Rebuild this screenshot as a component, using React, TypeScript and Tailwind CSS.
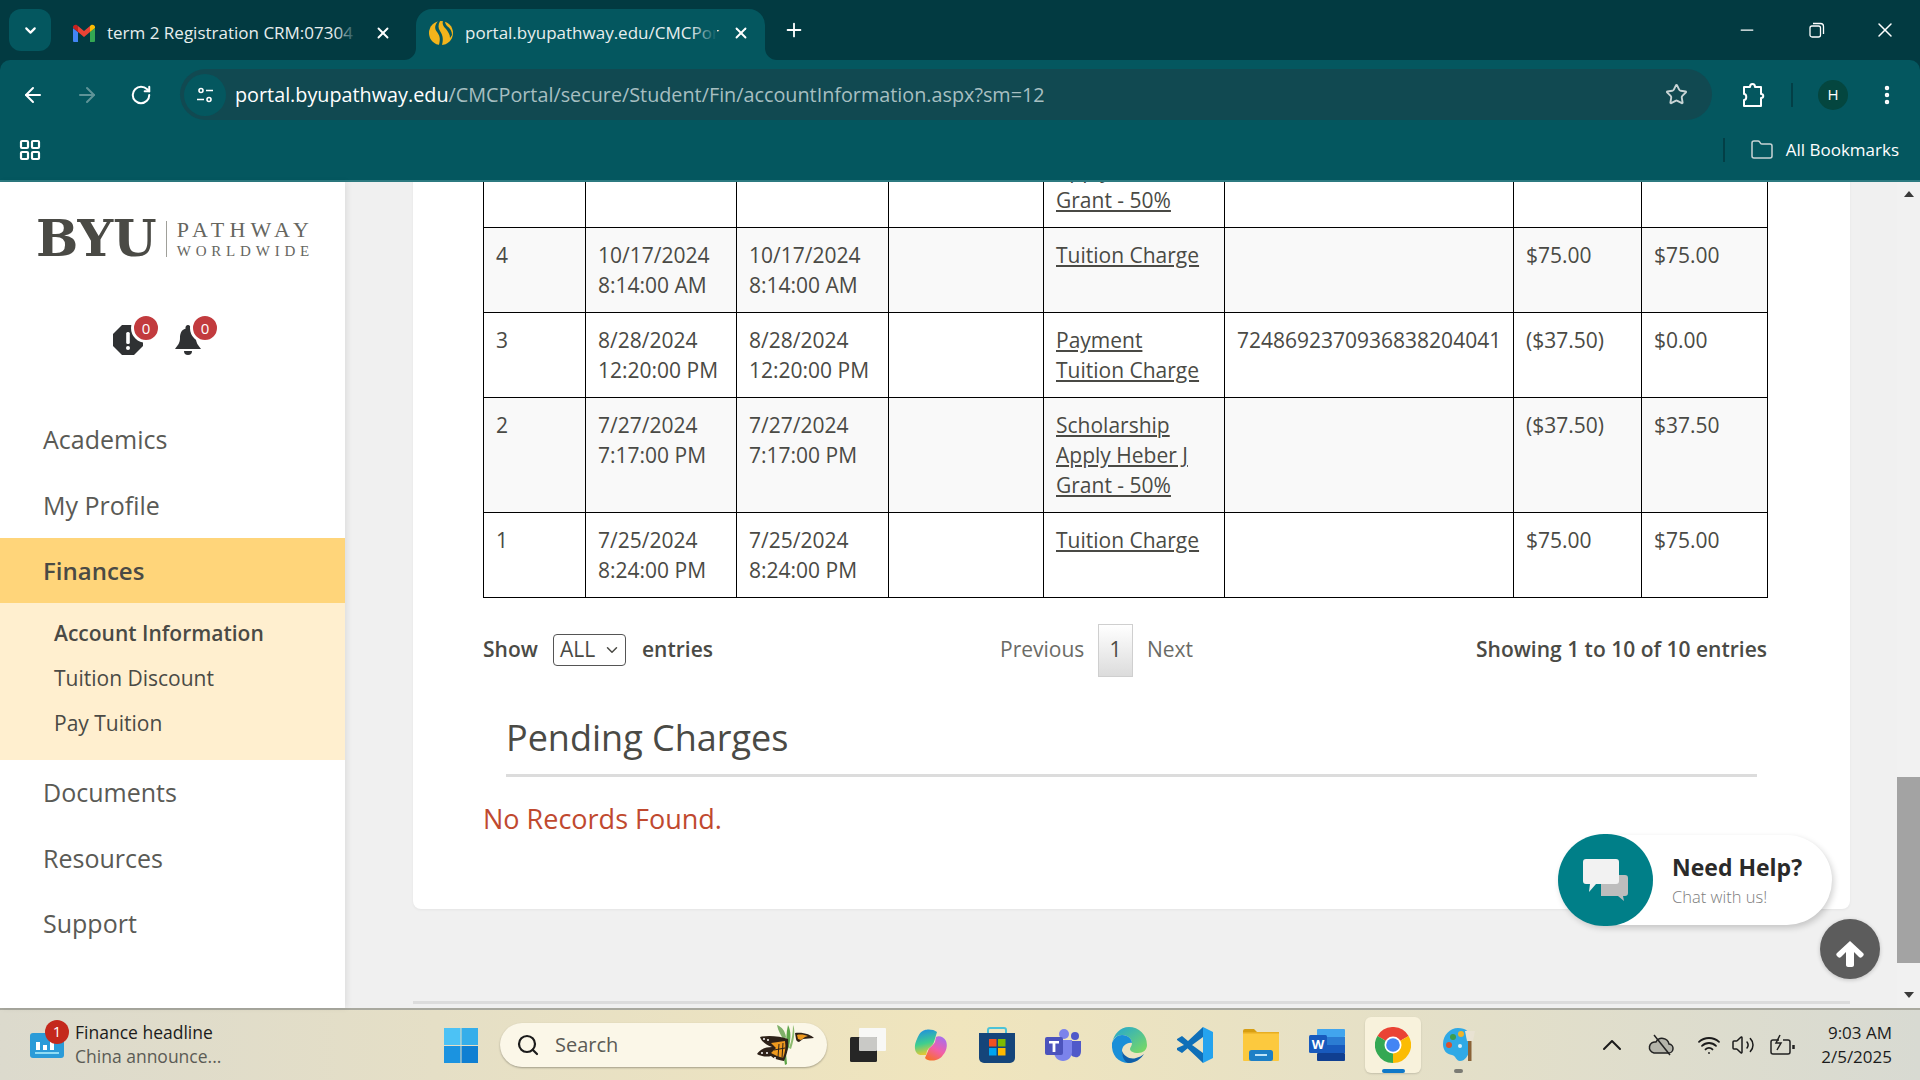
import { ArrowLeft, ArrowRight, ChevronDown, ChevronUp, EllipsisVertical, Folder, LayoutGrid, Minus, Plus, RotateCw, Search, Star, Volume2, Wifi, X } from "lucide-react";

const rows = [
  { n: "", a: [], b: [], links: ["Scholarship", "Apply Heber J", "Grant - 50%"], ref: "", amt: "", bal: "", alt: false },
  { n: "4", a: ["10/17/2024", "8:14:00 AM"], b: ["10/17/2024", "8:14:00 AM"], links: ["Tuition Charge"], ref: "", amt: "$75.00", bal: "$75.00", alt: true },
  { n: "3", a: ["8/28/2024", "12:20:00 PM"], b: ["8/28/2024", "12:20:00 PM"], links: ["Payment", "Tuition Charge"], ref: "7248692370936838204041", amt: "($37.50)", bal: "$0.00", alt: false },
  { n: "2", a: ["7/27/2024", "7:17:00 PM"], b: ["7/27/2024", "7:17:00 PM"], links: ["Scholarship", "Apply Heber J", "Grant - 50%"], ref: "", amt: "($37.50)", bal: "$37.50", alt: true },
  { n: "1", a: ["7/25/2024", "8:24:00 PM"], b: ["7/25/2024", "8:24:00 PM"], links: ["Tuition Charge"], ref: "", amt: "$75.00", bal: "$75.00", alt: false },
];

function GmailIcon() {
  return (
    <svg width="24" height="18" viewBox="0 0 24 18">
      <path d="M1 18V4l5 4v10H2a1 1 0 0 1-1-1z" fill="#4285f4" />
      <path d="M18 18V8l5-4v13a1 1 0 0 1-1 1z" fill="#34a853" />
      <path d="M6 8V2l6 5 6-5v6l-6 5z" fill="#ea4335" />
      <path d="M1 4V3c0-2 3-3.500 5-1v6z" fill="#c5221f" />
      <path d="M23 4V3c0-2-3-3.500-5-1v6z" fill="#fbbc04" />
    </svg>
  );
}

function PathwayIcon() {
  return (
    <svg width="24" height="24" viewBox="0 0 24 24">
      <circle cx="12" cy="12" r="12" fill="#f3b41b" />
      <path d="M9 0C6 4 5 7 8 11c2 3 4 5 2 13h3c2-7 0-11-2-14C9 7 9 4 11 0z" fill="#04575f" />
      <path d="M14 0c-1 3 0 5 3 8 2 3 4 5 4 9l2-3c0-4-2-7-5-9-1-1-2-3-2-5z" fill="#04575f" />
    </svg>
  );
}

function SiteIcon() {
  return (
    <svg width="18" height="18" viewBox="0 0 18 18" fill="none" stroke="#fff" strokeWidth="1.600">
      <circle cx="5" cy="4.500" r="2" />
      <path d="M10 4.500h7M1 13.500h7" />
      <circle cx="13" cy="13.500" r="2" />
    </svg>
  );
}

function ExtensionIcon() {
  return (
    <svg width="24" height="26" viewBox="0 0 24 26" fill="none" stroke="#fff" strokeWidth="2" strokeLinejoin="round">
      <path d="M2 5h6c0-4 5-4 5 0h6v7c3 0 3 4 0 4v8H2v-6c3 0 3-6 0-6z" />
    </svg>
  );
}

function RestoreIcon() {
  return (
    <svg width="16" height="16" viewBox="0 0 16 16" fill="none" stroke="#fff" strokeWidth="1.300">
      <rect x="1" y="4" width="10.500" height="11" rx="2" />
      <path d="M4 1.500h7.500a3 3 0 0 1 3 3V12" />
    </svg>
  );
}

function AlertIcon() {
  return (
    <svg width="30" height="30" viewBox="0 0 30 30">
      <path d="M9 0h12l9 9v12l-9 9H9l-9-9V9z" fill="#2f3133" />
      <rect x="13.200" y="7" width="3.600" height="12" rx="1.500" fill="#fff" />
      <circle cx="15" cy="23" r="2" fill="#fff" />
    </svg>
  );
}

function BellIcon() {
  return (
    <svg width="26" height="30" viewBox="0 0 26 30">
      <path d="M13 0a2.500 2.500 0 0 1 2.300 3.500C20 5 21 9 21 13c0 5 2 7 5 11H0c3-4 5-6 5-11 0-4 1-8 5.700-9.500A2.500 2.500 0 0 1 13 0z" fill="#2f3133" />
      <path d="M9 26h8a4 4 0 0 1-8 0z" fill="#2f3133" />
    </svg>
  );
}

function Badge({ className }: { className: string }) {
  return (
    <span className={`absolute flex h-[30px] w-[30px] items-center justify-center rounded-full border-[3px] border-white bg-[#c23b3e] text-[15px] text-white ${className}`}>0</span>
  );
}

function ChatIcon() {
  return (
    <svg width="46" height="42" viewBox="0 0 46 42">
      <path d="M18 16h24a3 3 0 0 1 3 3v15a3 3 0 0 1-3 3h-2l1 5-6-5H18z" fill="#bdbdbd" />
      <path d="M3 0h30a3 3 0 0 1 3 3v19a3 3 0 0 1-3 3H13l-7 8 1-8H3a3 3 0 0 1-3-3V3a3 3 0 0 1 3-3z" fill="#f2f2f2" />
    </svg>
  );
}

function UpArrow() {
  return (
    <svg width="28" height="26" viewBox="0 0 28 26" fill="#fff">
      <path d="M14 0l13 12c1 1 1 2 0 3l-1 1c-1 1-2 1-3 0l-5-5v13c0 1-1 2-2 2h-4c-1 0-2-1-2-2V11l-5 5c-1 1-2 1-3 0l-1-1c-1-1-1-2 0-3z" />
    </svg>
  );
}

function NewsIcon() {
  return (
    <svg width="34" height="25" viewBox="0 0 34 25">
      <rect width="34" height="25" rx="3" fill="#2b9bd8" />
      <rect x="6" y="9" width="4" height="8" fill="#fff" />
      <rect x="13" y="12" width="4" height="5" fill="#fff" />
      <rect x="20" y="6" width="4" height="11" fill="#fff" />
      <rect x="5" y="19" width="24" height="2" fill="#8fdcf5" />
    </svg>
  );
}

function WindowsIcon() {
  return (
    <svg width="34" height="35" viewBox="0 0 34 35">
      <rect width="16.500" height="17" fill="#4cc2f5" />
      <rect x="17.500" width="16.500" height="17" fill="#35aeea" />
      <rect y="18" width="16.500" height="17" fill="#1b93e0" />
      <rect x="17.500" y="18" width="16.500" height="17" fill="#0f7fd2" />
    </svg>
  );
}

function ButterflyIcon() {
  return (
    <svg width="58" height="40" viewBox="0 0 58 40">
      <path d="M20 0c5 2 8 6 9 12l-2 4c-3-6-6-10-7-16z" fill="#7fb069" />
      <path d="M31 0c3 6 3 12 1 22l-2 4c-1-9-1-18 1-26z" fill="#5da548" />
      <path d="M36 0c2 4 2 12-2 24l-2-1c3-8 4-16 4-23z" fill="#8dbb6f" />
      <path d="M26 28l2 12 2-1-1-11z" fill="#5da548" />
      <path d="M31 14C23 11 10 10 3 12c2 5 6 8 12 10C8 22 2 25 0 29c5 3 11 3 14 2 2 2 6 4 13 5 3-7 5-14 4-22z" fill="#2d2118" />
      <path d="M28 16l-14 2 5 5-5 5 6 3 6 2c2-5 3-11 2-17z" fill="#ee9a1f" />
      <path d="M22 19l-1 13M26 18l-1 15M17 25l11-2" stroke="#2d2118" strokeWidth="1" fill="none" />
      <circle cx="7" cy="14" r="1" fill="#fff" />
      <circle cx="11" cy="15" r="1" fill="#fff" />
      <circle cx="5" cy="28" r="1" fill="#fff" />
      <circle cx="10" cy="28" r="1" fill="#fff" />
      <circle cx="18" cy="33" r="1" fill="#fff" />
      <path d="M38 8l1 6c0 2 2 3 3 3l4-3 11-1c-3-3-10-6-19-5z" fill="#2d2118" />
      <path d="M40 10l1 4 3 1 4-3 3-1c-3-1-7-2-11-1z" fill="#ee9a1f" />
    </svg>
  );
}

function TerminalIcon() {
  return (
    <svg width="36" height="34" viewBox="0 0 36 34">
      <rect x="9" y="0" width="27" height="23" rx="1" fill="#f8f8f6" />
      <rect x="0" y="9" width="27" height="25" rx="1.500" fill="#262626" />
      <rect x="9" y="9" width="18" height="14" rx="1" fill="#c9c9c6" />
    </svg>
  );
}

function CopilotIcon() {
  return (
    <svg width="34" height="32" viewBox="0 0 34 32">
      <defs>
        <linearGradient id="cpA" x1="0.300" y1="0" x2="0.500" y2="1">
          <stop offset="0" stopColor="#1f8fe0" />
          <stop offset="0.550" stopColor="#3fcf8e" />
          <stop offset="1" stopColor="#f5c92c" />
        </linearGradient>
        <linearGradient id="cpB" x1="0.800" y1="0" x2="0.300" y2="1">
          <stop offset="0" stopColor="#a56ff0" />
          <stop offset="0.550" stopColor="#f25fa8" />
          <stop offset="1" stopColor="#f76f2e" />
        </linearGradient>
      </defs>
      <path d="M11 1C13 0 20 0 23 3L20 13C18 18 15 18 13 22L12 26C8 26 4 27 2 23C0 19 1 14 3 10C5 5 7 2 11 1z" fill="url(#cpA)" />
      <path d="M22 31C19 32 13 32 11 29L14 22C15 18 18 18 21 13L22 8C25 6 30 8 32 12C34 17 32 23 29 26C27 29 25 30 22 31z" fill="url(#cpB)" />
    </svg>
  );
}

function StoreIcon() {
  return (
    <svg width="36" height="36" viewBox="0 0 36 36">
      <path d="M9 8V3a2 2 0 0 1 2-2h14a2 2 0 0 1 2 2v5" fill="none" stroke="#4cc3d8" strokeWidth="2" />
      <path d="M0 6h36v25a5 5 0 0 1-5 5H5a5 5 0 0 1-5-5z" fill="#15457a" />
      <rect x="10" y="12" width="7.500" height="7.500" fill="#f25022" />
      <rect x="19" y="12" width="7.500" height="7.500" fill="#7fba00" />
      <rect x="10" y="21" width="7.500" height="7.500" fill="#00a4ef" />
      <rect x="19" y="21" width="7.500" height="7.500" fill="#ffb900" />
    </svg>
  );
}

function TeamsIcon() {
  return (
    <svg width="36" height="32" viewBox="0 0 36 32">
      <circle cx="19" cy="5" r="5" fill="#7b83eb" />
      <circle cx="30" cy="7" r="4" fill="#5059c9" />
      <path d="M25 12h11v10c0 5-3 7-6 6-3 0-5-3-5-6z" fill="#5059c9" />
      <path d="M9 11h18v12c0 5-4 9-9 9s-9-4-9-9z" fill="#7b83eb" />
      <rect x="0" y="8" width="18" height="18" rx="2" fill="#4b53bc" />
      <path d="M4 12h10v2.500h-3.600V23H7.600v-8.500H4z" fill="#fff" />
    </svg>
  );
}

function EdgeIcon() {
  return (
    <svg width="36" height="36" viewBox="0 0 36 36">
      <defs>
        <linearGradient id="edA" x1="0" y1="0" x2="1" y2="1">
          <stop offset="0" stopColor="#1fa5d6" />
          <stop offset="1" stopColor="#7fdc5c" />
        </linearGradient>
      </defs>
      <path d="M18 0a18 18 0 0 1 18 18c0 5-4 8-9 8-5 0-8-2-8-4 0-2 2-3 2-6 0-4-4-8-10-8-5 0-9 3-10 8C3 7 9 0 18 0z" fill="url(#edA)" />
      <path d="M1 16c2-5 5-8 10-8 6 0 10 4 10 8-5-1-10 3-10 8 0 6 5 10 11 12-2 0-3 0-4 0C7 36 0 28 1 16z" fill="#1a8fd8" />
      <path d="M33 27c-3 5-9 9-15 9-4 0-7-6-7-12 2 5 8 9 14 7 3-1 6-2 8-4z" fill="#0f5fa8" />
    </svg>
  );
}

function VsCodeIcon() {
  return (
    <svg width="36" height="36" viewBox="0 0 36 36">
      <path d="M26 0v10L11 21l-6 5-5-3v-2l7-3-7-5v-1l5-3 6 5zM26 26v10L7 18l4-3z" fill="#0f6fb8" />
      <path d="M26 0l10 5v26l-10 5z" fill="#25a3ee" />
    </svg>
  );
}

function ExplorerIcon() {
  return (
    <svg width="36" height="32" viewBox="0 0 36 32">
      <path d="M0 2a2 2 0 0 1 2-2h9l3 3h-14z" fill="#d79e12" />
      <rect y="3" width="36" height="29" rx="1" fill="#fcc93e" />
      <rect y="3" width="36" height="1.500" fill="#e7ae22" />
      <rect x="6" y="21" width="24" height="11" rx="2.500" fill="#1d7fc6" />
      <rect x="12" y="25" width="12" height="2" fill="#bfe3f8" />
    </svg>
  );
}

function WordIcon() {
  return (
    <svg width="36" height="32" viewBox="0 0 36 32">
      <rect x="8" y="0" width="28" height="8" rx="1" fill="#41a5ee" />
      <rect x="8" y="8" width="28" height="8" fill="#2b7cd3" />
      <rect x="8" y="16" width="28" height="8" fill="#185abd" />
      <rect x="8" y="24" width="28" height="8" rx="1" fill="#103f91" />
      <rect x="0" y="6" width="18" height="18" rx="1.500" fill="#185abd" />
      <text x="9" y="20" fontSize="13" fontWeight="700" textAnchor="middle" fill="#fff" fontFamily="Open Sans, sans-serif">W</text>
    </svg>
  );
}

function ChromeIcon() {
  return (
    <svg width="36" height="36" viewBox="0 0 36 36">
      <path d="M18 18L2.400 9A18 18 0 0 1 33.600 9z" fill="#ea4335" />
      <path d="M18 18L33.600 9A18 18 0 0 1 18 36z" fill="#fbbc04" />
      <path d="M18 18L18 36A18 18 0 0 1 2.400 9z" fill="#34a853" />
      <circle cx="18" cy="18" r="8.500" fill="#fff" />
      <circle cx="18" cy="18" r="6.800" fill="#4285f4" />
    </svg>
  );
}

function PaintIcon() {
  return (
    <svg width="34" height="34" viewBox="0 0 34 34">
      <path d="M15 0c8 0 12 4 12 10v12c-2 6-5 11-10 11-4 0-4-5-8-6C3 26 0 22 0 16 0 7 7 0 15 0z" fill="#2fa9e6" />
      <circle cx="10" cy="9" r="3" fill="#3c9d4e" />
      <circle cx="18" cy="6" r="3" fill="#f0b429" />
      <circle cx="6" cy="17" r="3" fill="#d9502e" />
      <circle cx="17" cy="18" r="2" fill="#d8f0fb" />
      <rect x="25" y="12" width="3.500" height="21" fill="#8a6338" />
      <path d="M22 3h10l-2 10h-6z" fill="#e8e2d2" />
    </svg>
  );
}

function CloudOffIcon() {
  return (
    <svg width="26" height="22" viewBox="0 0 26 22" fill="none" stroke="#222" strokeWidth="1.500">
      <path d="M6 19h14a4.500 4.500 0 0 0 1-9 7 7 0 0 0-13-2 5.500 5.500 0 0 0-2 11z" fill="#b4b4aa" />
      <path d="M6 1l16 20" />
    </svg>
  );
}

function BatteryIcon() {
  return (
    <svg width="26" height="22" viewBox="0 0 26 22" fill="none" stroke="#222" strokeWidth="1.500">
      <path d="M9 6H3a2 2 0 0 0-2 2v10a2 2 0 0 0 2 2h15a2 2 0 0 0 2-2V8a2 2 0 0 0-2-2h-5" />
      <path d="M23.500 11v4" strokeWidth="2.500" />
      <path d="M10 1L6 9h5l-4 7" />
    </svg>
  );
}

const taskIcons = [
  { id: "terminal", el: <div className="ml-[5px]"><TerminalIcon /></div> },
  { id: "copilot", el: <CopilotIcon /> },
  { id: "store", el: <StoreIcon /> },
  { id: "teams", el: <TeamsIcon /> },
  { id: "edge", el: <EdgeIcon /> },
  { id: "code", el: <VsCodeIcon /> },
  { id: "explorer", el: <ExplorerIcon /> },
  { id: "word", el: <WordIcon /> },
];

function BrowserChrome() {
  return (
    <header className="h-[182px] shrink-0 bg-[#023a41] text-white">
      <div className="flex h-[60px] items-end">
        <div className="mb-[9px] ml-[9px] flex h-[42px] w-[42px] items-center justify-center rounded-xl bg-[#04575f]">
          <ChevronDown size={17} strokeWidth={3} />
        </div>
        <div className="flex h-[51px] w-[365px] items-center pb-1 pl-[21px]">
          <GmailIcon />
          <span className="relative ml-[11px] w-[250px] whitespace-nowrap text-[17px] text-[#e7eeee]">
            term 2 Registration CRM:07304
            <span className="absolute inset-y-0 right-0 w-[22px] bg-gradient-to-r from-transparent to-[#023a41]" />
          </span>
          <X size={18} strokeWidth={2.500} className="ml-[17px]" />
        </div>
        <div className="relative flex h-[51px] w-[349px] items-center rounded-t-2xl bg-[#04575f] pb-1 pl-[13px]">
          <svg width="12" height="12" viewBox="0 0 12 12" className="absolute bottom-0 left-[-12px]"><path d="M12 0v12H0A12 12 0 0 0 12 0z" fill="#04575f" /></svg>
          <svg width="12" height="12" viewBox="0 0 12 12" className="absolute bottom-0 right-[-12px]"><path d="M0 0v12h12A12 12 0 0 1 0 0z" fill="#04575f" /></svg>
          <PathwayIcon />
          <span className="relative ml-[12px] w-[252px] whitespace-nowrap text-[17px] text-[#e7eeee]">
            portal.byupathway.edu/CMCPor
            <span className="absolute inset-y-0 right-0 w-[26px] bg-gradient-to-r from-transparent to-[#04575f]" />
          </span>
          <X size={18} strokeWidth={2.500} className="ml-[15px]" />
        </div>
        <div className="mb-[9px] ml-[18px] flex h-[42px] items-center">
          <Plus size={22} strokeWidth={2} />
        </div>
        <div className="mb-[9px] ml-auto flex h-[42px] items-center pr-[23px]">
          <Minus size={20} strokeWidth={1.500} />
          <div className="ml-[52px]"><RestoreIcon /></div>
          <X size={24} strokeWidth={1.500} className="ml-[48px]" />
        </div>
      </div>
      <div className="h-[122px] rounded-t-[10px] border-b-2 border-[#2c7a80] bg-[#04575f]">
        <div className="flex h-[69px] items-center pb-[9px] pt-[9px]">
          <ArrowLeft size={24} strokeWidth={2} className="ml-[21px]" />
          <ArrowRight size={24} strokeWidth={2} className="ml-[30px] text-[#5f9498]" />
          <RotateCw size={22} strokeWidth={2.200} className="ml-[31px]" />
          <div className="ml-[28px] flex h-[51px] w-[1532px] items-center rounded-full bg-[#114951]">
            <div className="ml-[4px] flex h-[42px] w-[42px] items-center justify-center rounded-full bg-[#04575f]"><SiteIcon /></div>
            <span className="ml-[9px] whitespace-nowrap text-[19.800px] text-white">portal.byupathway.edu<span className="text-[#a7bfc1]">/CMCPortal/secure/Student/Fin/accountInformation.aspx?sm=12</span></span>
            <Star size={23} strokeWidth={2} className="ml-auto mr-[24px] text-[#c8d4d5]" />
          </div>
          <div className="ml-[30px]"><ExtensionIcon /></div>
          <div className="ml-[25px] h-[24px] w-[2px] bg-[#033f46]" />
          <div className="ml-[25px] flex h-[30px] w-[30px] items-center justify-center rounded-full bg-[#04463f] text-[15px]">H</div>
          <EllipsisVertical size={24} strokeWidth={2.500} className="ml-[27px]" />
        </div>
        <div className="flex h-[51px] items-center pb-[9px]">
          <LayoutGrid size={24} strokeWidth={2.200} className="ml-[18px]" />
          <div className="ml-auto h-[24px] w-[2px] bg-[#033f46]" />
          <Folder size={24} strokeWidth={1.500} className="ml-[25px] text-[#c8d4d5]" />
          <span className="ml-[12px] mr-[21px] whitespace-nowrap text-[17px]">All Bookmarks</span>
        </div>
      </div>
    </header>
  );
}

function Sidebar() {
  const navCls = "flex h-[65.500px] items-center pl-[43px] text-[25px] text-[#5a5a55]";
  return (
    <aside className="relative z-10 h-full w-[345px] shrink-0 bg-white shadow-[2px_0_6px_rgba(0,0,0,0.08)]">
      <div className="h-[225px] pl-[36px] pt-[33px]">
        <div className="flex h-[48px] items-center text-[#4a4a45]">
          <span className="font-['DejaVu_Serif',serif] text-[50px] font-bold leading-none">BYU</span>
          <span className="ml-[9px] h-[36px] w-px bg-[#a0a09a]" />
          <div className="ml-[10px] flex flex-col font-['Liberation_Serif',serif]">
            <span className="text-[22px] leading-[24px] tracking-[5.200px] text-[#66665f]">PATHWAY</span>
            <span className="text-[15px] leading-[18px] tracking-[4.800px] text-[#66665f]">WORLDWIDE</span>
          </div>
        </div>
        <div className="mt-[62px] flex">
          <div className="relative ml-[77px] h-[30px] w-[30px]">
            <AlertIcon />
            <Badge className="left-[18px] top-[-12px]" />
          </div>
          <div className="relative ml-[32px] h-[30px] w-[26px]">
            <BellIcon />
            <Badge className="left-[15px] top-[-12px]" />
          </div>
        </div>
      </div>
      <nav>
        <div className={navCls}>Academics</div>
        <div className={navCls}>My Profile</div>
        <div className="flex h-[65px] items-center bg-[#ffd57a] pl-[43px] text-[24px] font-semibold text-[#4a4a45]">Finances</div>
        <div className="h-[157px] bg-[#ffefcf] pl-[54px] pt-[8px] text-[21px] text-[#4a4a45]">
          <div className="flex h-[45px] items-center font-semibold">Account Information</div>
          <div className="flex h-[45px] items-center">Tuition Discount</div>
          <div className="flex h-[45px] items-center">Pay Tuition</div>
        </div>
        <div className={navCls}>Documents</div>
        <div className={navCls}>Resources</div>
        <div className={navCls}>Support</div>
      </nav>
    </aside>
  );
}

function TxTable() {
  const td = "border border-black p-3 align-top";
  return (
    <table className="w-[1284px] table-fixed border-collapse text-[21px] leading-[30px] text-[#4a4a45]">
      <colgroup>
        <col className="w-[102px]" />
        <col className="w-[151px]" />
        <col className="w-[152px]" />
        <col className="w-[155px]" />
        <col className="w-[181px]" />
        <col className="w-[289px]" />
        <col className="w-[128px]" />
        <col className="w-[126px]" />
      </colgroup>
      <tbody>
        {rows.map((r, i) => (
          <tr key={i} className={r.alt ? "bg-[#f9f9f9]" : "bg-white"}>
            <td className={td}>{r.n}</td>
            <td className={td}>{r.a.map((t) => <div key={t}>{t}</div>)}</td>
            <td className={td}>{r.b.map((t) => <div key={t}>{t}</div>)}</td>
            <td className={td}></td>
            <td className={td}>{r.links.map((t) => <div key={t} className="underline">{t}</div>)}</td>
            <td className={td}>{r.ref}</td>
            <td className={td}>{r.amt}</td>
            <td className={td}>{r.bal}</td>
          </tr>
        ))}
      </tbody>
    </table>
  );
}

function MainContent() {
  return (
    <main className="relative h-full min-w-0 flex-1 overflow-hidden bg-[#f0f0f0]">
      <div className="mt-[-70px] ml-[68px] h-[797px] w-[1437px] rounded-b-lg bg-white pl-[70px] shadow-[0_1px_3px_rgba(0,0,0,0.05)]">
        <TxTable />
        <div className="flex h-[104px] w-[1284px] items-center text-[21px] text-[#4a4a45]">
          <span className="w-[55px] whitespace-nowrap font-semibold">Show</span>
          <div className="ml-[15px] flex h-[32px] w-[73px] items-center justify-between rounded border border-[#555] pl-[6px] pr-[4px]">ALL<ChevronDown size={18} /></div>
          <span className="ml-[16px] w-[71px] whitespace-nowrap font-semibold">entries</span>
          <span className="ml-[287px] w-[83px] whitespace-nowrap text-[#6b6b66]">Previous</span>
          <span className="ml-[15px] flex h-[53px] w-[35px] items-center justify-center border border-[#cfcfcf] bg-gradient-to-b from-white to-[#dcdcdc]">1</span>
          <span className="ml-[14px] text-[#6b6b66]">Next</span>
          <span className="ml-auto font-semibold">Showing 1 to 10 of 10 entries</span>
        </div>
        <div className="ml-[23px] mt-[9px] h-[66px] w-[1251px] border-b-[3px] border-[#dcdcdc] text-[36px] leading-[54px] text-[#4a4a45]">Pending Charges</div>
        <div className="mt-[24px] text-[27px] leading-[36px] text-[#c0492f]">No Records Found.</div>
      </div>
      <div className="ml-[68px] mt-[92px] h-[3px] w-[1437px] bg-[#dcdcdc]" />
      <div className="absolute left-[1213px] top-[653px] flex h-[90px] w-[274px] items-center rounded-full bg-white shadow-[2px_3px_6px_rgba(0,0,0,0.18)]">
        <div className="flex h-[92px] w-[95px] shrink-0 items-center justify-center rounded-full bg-[#007f88]"><ChatIcon /></div>
        <div className="ml-[19px]">
          <div className="text-[23px] font-bold leading-[30px] text-[#2a2a2a]">Need Help?</div>
          <div className="mt-[3px] text-[16.500px] font-light leading-[24px] text-[#7d7d7d]">Chat with us!</div>
        </div>
      </div>
      <div className="absolute left-[1475px] top-[737px] flex h-[60px] w-[60px] items-center justify-center rounded-full bg-[#5c5c5c] pt-[9px] shadow-[0_1px_4px_rgba(0,0,0,0.2)]"><UpArrow /></div>
    </main>
  );
}

function Scrollbar() {
  return (
    <div className="relative z-10 flex h-full w-[23px] shrink-0 flex-col bg-[#f1f1f1]">
      <div className="flex h-[22px] items-center justify-center pt-[2px]">
        <span className="h-0 w-0 border-x-[5px] border-b-[6px] border-x-transparent border-b-[#3a3a3a]" />
      </div>
      <div className="h-[573px]" />
      <div className="h-[186px] bg-[#a3a3a3]" />
      <div className="flex flex-1 items-end justify-center pb-[10px]">
        <span className="h-0 w-0 border-x-[5px] border-t-[6px] border-x-transparent border-t-[#3a3a3a]" />
      </div>
    </div>
  );
}

function Taskbar() {
  return (
    <footer className="flex h-[72px] shrink-0 items-center border-t-2 border-[#a9a99f] bg-gradient-to-r from-[#dcdacd] via-[#f0e5bd] to-[#d8dad2] text-[#1b1b1b]">
      <div className="relative ml-[30px] h-[25px] w-[34px]">
        <NewsIcon />
        <span className="absolute left-[15px] top-[-13px] flex h-[24px] w-[24px] items-center justify-center rounded-full bg-[#c4281c] text-[15px] text-white">1</span>
      </div>
      <div className="ml-[11px] mt-[-2px] w-[201px] text-[17.500px] leading-[24px]">
        <div>Finance headline</div>
        <div className="text-[#5b5b55]">China announce...</div>
      </div>
      <div className="ml-[168px]"><WindowsIcon /></div>
      <div className="ml-[22px] flex h-[44px] w-[327px] items-center rounded-full bg-[#fbf7e8] pl-[16px] shadow-[0_1px_2px_rgba(0,0,0,0.3)]">
        <Search size={24} strokeWidth={2.200} />
        <span className="ml-[15px] text-[20px] text-[#5b5b55]">Search</span>
        <div className="ml-auto mr-[12px]"><ButterflyIcon /></div>
      </div>
      <div className="ml-[5px] flex items-center">
        {taskIcons.map((t) => (
          <div key={t.id} className="flex h-[56px] w-[66px] items-center justify-center">{t.el}</div>
        ))}
        <div className="relative ml-[5px] flex h-[56px] w-[56px] items-center justify-center rounded-md bg-[#f8f2dc] shadow-[0_1px_2px_rgba(0,0,0,0.15)]">
          <ChromeIcon />
          <span className="absolute bottom-0 h-[4px] w-[23px] rounded-full bg-[#0f78c8]" />
        </div>
        <div className="relative ml-[9px] flex h-[56px] w-[56px] items-center justify-center">
          <div className="ml-[4px]"><PaintIcon /></div>
          <span className="absolute bottom-0 h-[4px] w-[9px] rounded-full bg-[#7b7b74]" />
        </div>
      </div>
      <div className="ml-[110px]"><ChevronUp size={32} strokeWidth={1.500} /></div>
      <div className="ml-[20px]"><CloudOffIcon /></div>
      <Wifi size={24} strokeWidth={1.800} className="ml-[23px]" />
      <Volume2 size={24} strokeWidth={1.500} className="ml-[10px]" />
      <div className="ml-[15px]"><BatteryIcon /></div>
      <div className="ml-auto mr-[28px] text-right text-[17px] leading-[24px]">
        <div>9:03 AM</div>
        <div>2/5/2025</div>
      </div>
    </footer>
  );
}

export default function App() {
  return (
    <div className="flex h-[1080px] w-[1920px] flex-col overflow-hidden font-['Open_Sans',sans-serif]">
      <BrowserChrome />
      <div className="flex h-[826px] min-h-0">
        <Sidebar />
        <MainContent />
        <Scrollbar />
      </div>
      <Taskbar />
    </div>
  );
}
